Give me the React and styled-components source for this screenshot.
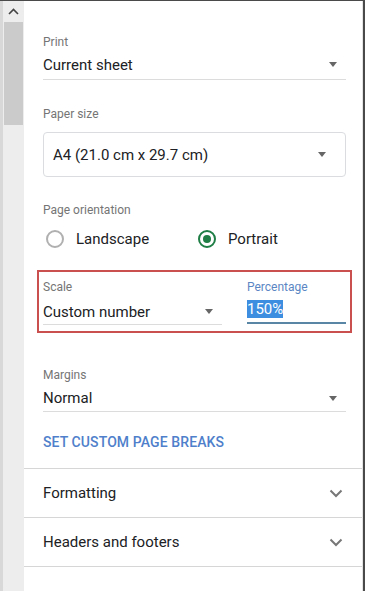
import React from 'react';
import styled, { createGlobalStyle } from 'styled-components';

const GlobalStyle = createGlobalStyle`
  html, body {
    margin: 0;
    padding: 0;
    background: #ffffff;
  }
  body {
    font-family: Roboto, 'Liberation Sans', Arial, sans-serif;
  }
`;

const Frame = styled.div`
  display: flex;
  height: 590px;
  border-top: 1px solid #4a4a4a;
  overflow: hidden;
`;

const Scrollbar = styled.div`
  width: 21px;
  border-left: 3px solid #d8d8d8;
  background: #ededed;
  display: flex;
  flex-direction: column;
  align-items: center;
`;

const ScrollArrow = styled.div`
  height: 21px;
  display: flex;
  align-items: center;
  justify-content: center;
`;

const Thumb = styled.div`
  width: 19px;
  height: 103px;
  background: #cbcbcb;
`;

const Panel = styled.div`
  flex: 1;
  background: #ffffff;
  border-right: 1px solid #e4e4e4;
`;

const Edge = styled.div`
  width: 2px;
  background: #4a4a4a;
`;

const Settings = styled.div`
  padding: 33px 16px 17px 19px;
`;

const Label = styled.div`
  font-size: 12px;
  line-height: 16px;
  color: ${p => (p.active ? '#5b86c4' : '#757575')};
  margin-top: ${p => p.top || 0}px;
`;

const SelectRow = styled.div`
  display: flex;
  align-items: center;
  justify-content: space-between;
  box-sizing: border-box;
  height: ${p => p.h || 30}px;
  padding: ${p => p.pt || 0}px 9px 0 0;
  border-bottom: 1px solid #dcdcdc;
  font-size: 15px;
  color: #202124;
`;

const BoxSelect = styled.div`
  margin-top: 10px;
  height: 43px;
  border: 1px solid #dadce0;
  border-radius: 4px;
  display: flex;
  align-items: center;
  justify-content: space-between;
  padding: 0 19px 0 9px;
  font-size: 15px;
  color: #202124;
`;

const Caret = styled.span`
  width: 0;
  height: 0;
  border-left: 4.5px solid transparent;
  border-right: 4.5px solid transparent;
  border-top: 5px solid #666;
`;

const RadioRow = styled.div`
  margin-top: 6px;
  height: 30px;
  display: flex;
  align-items: center;
`;

const RadioOption = styled.label`
  display: flex;
  align-items: center;
  width: ${p => p.w}px;
  margin-left: 3px;
  font-size: 15px;
  color: #202124;
`;

const RadioCircle = styled.span`
  box-sizing: border-box;
  width: 18px;
  height: 18px;
  border-radius: 50%;
  border: 2px solid ${p => (p.checked ? '#1e7e45' : '#b0b0b0')};
  display: flex;
  align-items: center;
  justify-content: center;
  margin-right: 12px;

  &::after {
    content: '';
    display: ${p => (p.checked ? 'block' : 'none')};
    width: 8px;
    height: 8px;
    border-radius: 50%;
    background: #1e7e45;
  }
`;

const Highlight = styled.div`
  margin: 16px -6px 0 -6px;
  border: 2px solid #c9504e;
  padding: 7px 4px 6px 4px;
  display: flex;
  gap: 25px;
`;

const Field = styled.div`
  width: ${p => p.w}px;
`;

const NumberInput = styled.div`
  height: 27px;
  border-bottom: 2px solid #5a86a6;
  font-size: 15px;
  display: flex;
  align-items: center;
`;

const Selected = styled.span`
  background: #3d8ee0;
  color: #ffffff;
  line-height: 18px;
`;

const LinkButton = styled.div`
  margin-top: 21px;
  font-size: 14px;
  font-weight: 500;
  line-height: 18px;
  color: #4f7fcb;
  letter-spacing: 0.1px;
`;

const Accordion = styled.div`
  display: flex;
  align-items: center;
  justify-content: space-between;
  height: 48px;
  border-top: 1px solid #d6d6d6;
  padding: 0 19px 0 19px;
  font-size: 15px;
  color: #202124;
`;

const Bottom = styled.div`
  border-top: 1px solid #d6d6d6;
`;

function Chevron() {
  return (
    <svg width="14" height="9" viewBox="0 0 14 9">
      <path d="M1.5 1.5 L7 7 L12.5 1.5" fill="none" stroke="#777" strokeWidth="2" />
    </svg>
  );
}

export default function App() {
  return (
    <React.Fragment>
      <GlobalStyle />
      <Frame>
        <Scrollbar>
          <ScrollArrow>
            <svg width="11" height="7" viewBox="0 0 11 7">
              <path d="M1 6 L5.5 1.5 L10 6" fill="none" stroke="#444" strokeWidth="1.6" />
            </svg>
          </ScrollArrow>
          <Thumb />
        </Scrollbar>
        <Panel>
          <Settings>
            <Label>Print</Label>
            <SelectRow>
              <span>Current sheet</span>
              <Caret />
            </SelectRow>

            <Label top={26}>Paper size</Label>
            <BoxSelect>
              <span>A4 (21.0 cm x 29.7 cm)</span>
              <Caret />
            </BoxSelect>

            <Label top={25}>Page orientation</Label>
            <RadioRow>
              <RadioOption w={149}>
                <RadioCircle />
                Landscape
              </RadioOption>
              <RadioOption w={120}>
                <RadioCircle checked />
                Portrait
              </RadioOption>
            </RadioRow>

            <Highlight>
              <Field w={179}>
                <Label>Scale</Label>
                <SelectRow h={30} pt={4}>
                  <span>Custom number</span>
                  <Caret />
                </SelectRow>
              </Field>
              <Field w={99}>
                <Label active>Percentage</Label>
                <NumberInput>
                  <Selected>150%</Selected>
                </NumberInput>
              </Field>
            </Highlight>

            <Label top={34}>Margins</Label>
            <SelectRow h={29} pt={2}>
              <span>Normal</span>
              <Caret />
            </SelectRow>

            <LinkButton>SET CUSTOM PAGE BREAKS</LinkButton>
          </Settings>

          <Accordion>
            <span>Formatting</span>
            <Chevron />
          </Accordion>
          <Accordion>
            <span>Headers and footers</span>
            <Chevron />
          </Accordion>
          <Bottom />
        </Panel>
        <Edge />
      </Frame>
    </React.Fragment>
  );
}
